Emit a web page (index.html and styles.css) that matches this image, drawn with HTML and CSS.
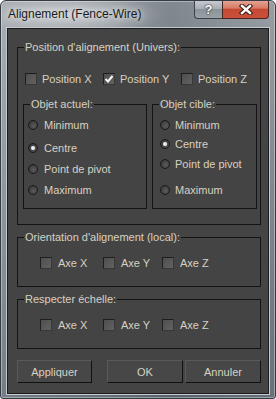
FILE: index.html
```html
<!DOCTYPE html>
<html lang="fr">
  <head>
    <meta charset="UTF-8" />
    <title>Alignement (Fence-Wire)</title>
    <link rel="stylesheet" href="styles.css">
  </head>
  <body>
    <div class="window">
      <div class="titlebar">
        <span class="title">Alignement (Fence-Wire)</span>
        <div class="caption-buttons">
          <span class="cap-btn help">?</span>
          <span class="cap-btn close">
            <svg width="14" height="11" viewBox="0 0 14 11">
              <path d="M3 2 L11 9 M11 2 L3 9" stroke="#3a1a14" stroke-width="4.5" stroke-linecap="square" />
              <path d="M3 2 L11 9 M11 2 L3 9" stroke="#ffffff" stroke-width="2.4" stroke-linecap="square" />
            </svg>
          </span>
        </div>
      </div>

      <div class="client">
        <fieldset class="group group-pos">
          <legend>Position d'alignement (Univers):</legend>
          <div class="check-row row-pos">
            <label class="check"><span class="box"></span>Position X</label>
            <label class="check"><span class="box checked">
              <svg width="10" height="10" viewBox="0 0 10 10"><path d="M1.5 5 L4 7.5 L8.5 2" fill="none" stroke="#f4f4f4" stroke-width="2" /></svg>
            </span>Position Y</label>
            <label class="check"><span class="box"></span>Position Z</label>
          </div>

          <div class="sub-groups">
            <fieldset class="group sub sub-left">
              <legend>Objet actuel:</legend>
              <label class="radio r1"><span class="dot"></span>Minimum</label>
              <label class="radio r2"><span class="dot on"></span>Centre</label>
              <label class="radio r3"><span class="dot"></span>Point de pivot</label>
              <label class="radio r4"><span class="dot"></span>Maximum</label>
            </fieldset>
            <fieldset class="group sub sub-right">
              <legend>Objet cible:</legend>
              <label class="radio r1"><span class="dot"></span>Minimum</label>
              <label class="radio r2"><span class="dot on"></span>Centre</label>
              <label class="radio r3"><span class="dot"></span>Point de pivot</label>
              <label class="radio r4"><span class="dot"></span>Maximum</label>
            </fieldset>
          </div>
        </fieldset>

        <fieldset class="group group-axes">
          <legend>Orientation d'alignement (local):</legend>
          <div class="check-row row-axes">
            <label class="check"><span class="box"></span>Axe X</label>
            <label class="check"><span class="box"></span>Axe Y</label>
            <label class="check"><span class="box"></span>Axe Z</label>
          </div>
        </fieldset>

        <fieldset class="group group-axes">
          <legend>Respecter échelle:</legend>
          <div class="check-row row-axes">
            <label class="check"><span class="box"></span>Axe X</label>
            <label class="check"><span class="box"></span>Axe Y</label>
            <label class="check"><span class="box"></span>Axe Z</label>
          </div>
        </fieldset>

        <div class="btn-row">
          <button class="btn btn-apply">Appliquer</button>
          <button class="btn btn-ok">OK</button>
          <button class="btn">Annuler</button>
        </div>
      </div>
    </div>
  </body>
</html>
```

FILE: styles.css
```css
body {
  margin: 0;
  background-color: #ffffff;
  font-family: "Liberation Sans", Arial, sans-serif;
}

.window {
  width: 276px;
  height: 399px;
  box-sizing: border-box;
  border: 1px solid #343c46;
  border-radius: 6px 6px 3px 3px;
  background:
    radial-gradient(ellipse 90px 22px at 70px 14px, rgba(255, 255, 255, 0.45), rgba(255, 255, 255, 0) 100%),
    linear-gradient(to bottom, rgba(255, 255, 255, 0.08), rgba(30, 45, 60, 0.35)),
    linear-gradient(to right, #a3a8ae 0%, #8c9399 40%, #767e86 62%, #8f969c 100%);
  box-shadow: inset 0 0 0 1px rgba(255, 255, 255, 0.35);
  display: flex;
  flex-direction: column;
  overflow: hidden;
}

.titlebar {
  height: 27px;
  display: flex;
  justify-content: space-between;
  align-items: flex-start;
  flex-shrink: 0;
}

.title {
  margin: 6px 0 0 7px;
  font-size: 12px;
  line-height: 15px;
  color: #1b1b1b;
  text-shadow: 0 0 6px rgba(255, 255, 255, 0.8), 0 0 10px rgba(255, 255, 255, 0.6);
}

.caption-buttons {
  display: flex;
  margin: -1px 6px 0 0;
}

.cap-btn {
  height: 19px;
  box-sizing: border-box;
  border: 1px solid #3b424a;
  border-top: none;
  display: flex;
  align-items: center;
  justify-content: center;
}

.help {
  width: 28px;
  border-right: none;
  border-radius: 0 0 0 4px;
  background: linear-gradient(to bottom, #c9ced3 0%, #a9afb5 48%, #8b9299 52%, #9aa1a7 100%);
  color: #ffffff;
  font-weight: bold;
  font-size: 13px;
  text-shadow: 0 0 2px #222, 0 0 1px #222;
}

.close {
  width: 47px;
  border-color: #4a2620;
  border-radius: 0 0 4px 0;
  background: linear-gradient(to bottom, #e6a898 0%, #d77a66 45%, #c54a33 52%, #c8503a 100%);
}

.client {
  margin: 0 6px;
  height: 366px;
  box-sizing: border-box;
  border: 1px solid #1c1c1c;
  box-shadow: 0 0 0 1px #c4cad0;
  background-color: #444444;
  color: #d8d1c2;
  font-size: 11px;
}

/* group boxes */
.group {
  margin: 0;
  padding: 0;
  min-width: 0;
  border: 1px solid #141414;
}

.group legend {
  margin-left: 6px;
  padding: 0 1px;
  font-size: 11px;
  line-height: 12px;
}

.group-pos {
  margin: 12px 7px 0 9px;
}

.group-axes {
  margin: 6px 7px 0 9px;
}

/* checkboxes */
.check-row {
  display: flex;
  align-items: center;
  height: 14px;
}

.check {
  display: flex;
  align-items: center;
  gap: 5px;
  line-height: 14px;
}

.box {
  width: 12px;
  height: 12px;
  box-sizing: border-box;
  border: 1px solid;
  border-color: #1e1e1e #383838 #383838 #1e1e1e;
  background: linear-gradient(to bottom right, #4e4e4e, #626262);
  display: flex;
  align-items: center;
  justify-content: center;
  flex-shrink: 0;
}

.row-pos {
  margin-top: 19px;
  padding-left: 7px;
}

.row-pos .check {
  width: 78px;
}

.row-axes {
  margin: 13px 0 16px;
  padding-left: 22px;
}

.row-axes .check:nth-child(1) {
  width: 63px;
}

.row-axes .check:nth-child(2) {
  width: 59px;
}

.row-axes .check {
  gap: 6px;
}

/* sub groups with radios */
.sub-groups {
  display: grid;
  grid-template-columns: 124px 105px;
  gap: 5px;
  margin: 12px 3px 15px 5px;
}

.sub {
  padding-bottom: 11px;
}

.radio {
  display: flex;
  align-items: center;
  gap: 6px;
  height: 14px;
}

.sub-left .radio {
  padding-left: 4px;
}

.sub-right .radio {
  padding-left: 7px;
  gap: 5px;
}

.sub .r1 {
  margin-top: 8px;
}

.sub-left .r2 {
  margin-top: 9px;
}

.sub-left .r3,
.sub-left .r4 {
  margin-top: 7px;
}

.sub-right .r2 {
  margin-top: 5px;
}

.sub-right .r3 {
  margin-top: 6px;
}

.sub-right .r4 {
  margin-top: 12px;
}

.dot {
  width: 10px;
  height: 10px;
  box-sizing: border-box;
  border-radius: 50%;
  border: 1px solid #1a1a1a;
  background: radial-gradient(circle at 60% 60%, #5c5c5c 0%, #3c3c3c 70%);
  display: flex;
  align-items: center;
  justify-content: center;
  flex-shrink: 0;
}

.dot.on::after {
  content: "";
  width: 4px;
  height: 4px;
  border-radius: 50%;
  background-color: #f2f2f2;
}

/* bottom buttons */
.btn-row {
  display: flex;
  margin: 11px 0 0 9px;
}

.btn {
  width: 76px;
  height: 23px;
  box-sizing: border-box;
  border: 1px solid;
  border-color: #5a5a5a #111111 #111111 #5a5a5a;
  background-color: #474747;
  color: #d8d1c2;
  font-family: "Liberation Sans", Arial, sans-serif;
  font-size: 11px;
  padding: 0;
}

.btn-apply {
  width: 75px;
  margin-right: 15px;
}

.btn-ok {
  margin-right: 2px;
}
```
